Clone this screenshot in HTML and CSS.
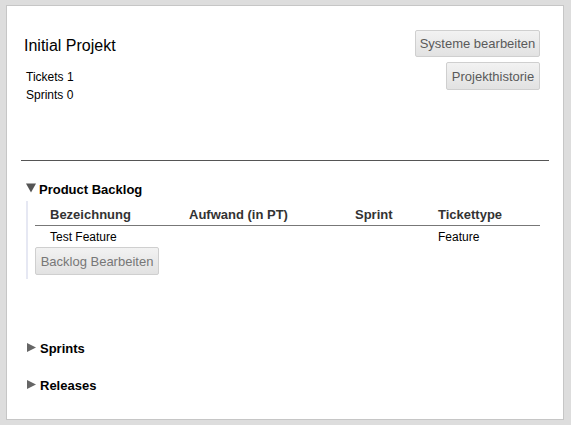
FILE: index.html
```html
<!DOCTYPE html>
<html lang="de">
<head>
<meta charset="utf-8">
<title>Initial Projekt</title>
<link rel="stylesheet" href="styles.css">
</head>
<body>
<div class="panel">
  <div class="header">
    <div class="info">
      <h1 class="title">Initial Projekt</h1>
      <div class="stats">
        <div>Tickets 1</div>
        <div>Sprints 0</div>
      </div>
    </div>
    <div class="actions">
      <button class="btn btn-systems">Systeme bearbeiten</button>
      <button class="btn btn-history">Projekthistorie</button>
    </div>
  </div>
  <div class="rule"></div>

  <div class="section open">
    <div class="section-head">
      <svg class="tri" width="10" height="10" viewBox="0 0 10 10"><path d="M0 0.5 L10 0.5 L5 9.5 Z" fill="#555"/></svg>
      <span>Product Backlog</span>
    </div>
    <div class="section-body">
      <div class="table">
        <div class="row head">
          <div class="c1">Bezeichnung</div>
          <div class="c2">Aufwand (in PT)</div>
          <div class="c3">Sprint</div>
          <div class="c4">Tickettype</div>
        </div>
        <div class="row">
          <div class="c1">Test Feature</div>
          <div class="c2"></div>
          <div class="c3"></div>
          <div class="c4">Feature</div>
        </div>
      </div>
      <button class="btn btn-backlog">Backlog Bearbeiten</button>
    </div>
  </div>

  <div class="section closed first-closed">
    <div class="section-head">
      <svg class="tri tri-right" width="10" height="10" viewBox="0 0 10 10"><path d="M0 0 L9 4.5 L0 9 Z" fill="#666"/></svg>
      <span>Sprints</span>
    </div>
  </div>
  <div class="section closed">
    <div class="section-head">
      <svg class="tri tri-right" width="10" height="10" viewBox="0 0 10 10"><path d="M0 0 L9 4.5 L0 9 Z" fill="#666"/></svg>
      <span>Releases</span>
    </div>
  </div>
</div>
</body>
</html>
```

FILE: styles.css
```css
* { box-sizing: border-box; }
html, body { margin: 0; }
body {
  background: #dddddd;
  padding: 5px 7px 0 6px;
  font-family: "Liberation Sans", Arial, sans-serif;
  color: #000;
}
.panel {
  width: 558px;
  height: 415px;
  background: #fff;
  border: 1px solid #c6c6c6;
}
.header {
  display: flex;
  justify-content: space-between;
  align-items: flex-start;
  padding: 24px 23px 0 17px;
  height: 97px;
}
.title {
  margin: 7px 0 0 0;
  font-size: 16px;
  line-height: 18px;
  font-weight: normal;
}
.stats {
  margin: 13px 0 0 2px;
  font-size: 12px;
  line-height: 18px;
}
.actions {
  display: flex;
  flex-direction: column;
  align-items: flex-end;
  gap: 5px;
}
.btn {
  font-family: "Liberation Sans", Arial, sans-serif;
  font-size: 13px;
  color: #5a5a5a;
  background: linear-gradient(#f2f2f2, #e2e2e2);
  border: 1px solid #cfcfcf;
  border-radius: 2px;
  height: 27px;
  padding: 0;
  text-align: center;
}
.btn-systems { width: 125px; }
.btn-history { width: 94px; height: 28px; }
.rule {
  margin: 57px 14px 0 14px;
  height: 1px;
  background: #555;
}
.section {
  padding-left: 19px;
}
.section.open { margin-top: 21px; }
.section-head {
  display: flex;
  align-items: flex-start;
  font-size: 13px;
  line-height: 16px;
  font-weight: bold;
}
.tri {
  margin-top: 1px;
  margin-right: 3px;
  flex: none;
}
.tri-right {
  margin-top: 2px;
  margin-left: 1px;
  margin-right: 3px;
}
.section-body {
  margin-top: 3px;
  border-left: 2px solid #e6e8f3;
  padding: 0 0 4px 7px;
  width: 523px;
}
.table {
  width: 505px;
}
.row {
  display: grid;
  grid-template-columns: 140px 165px 83px 117px;
  font-size: 12px;
  line-height: 16px;
  padding: 3px 0 2px;
}
.row > div { padding-left: 15px; }
.row.head {
  font-size: 13px;
  font-weight: bold;
  color: #333;
  padding: 6px 0 2px;
  border-bottom: 1px solid #777;
}
.row.head .c2 { padding-left: 14px; }
.btn-backlog {
  width: 124px;
  height: 28px;
  color: #777;
}
.first-closed { margin-top: 62px; }
.closed + .closed { margin-top: 21px; }
```
